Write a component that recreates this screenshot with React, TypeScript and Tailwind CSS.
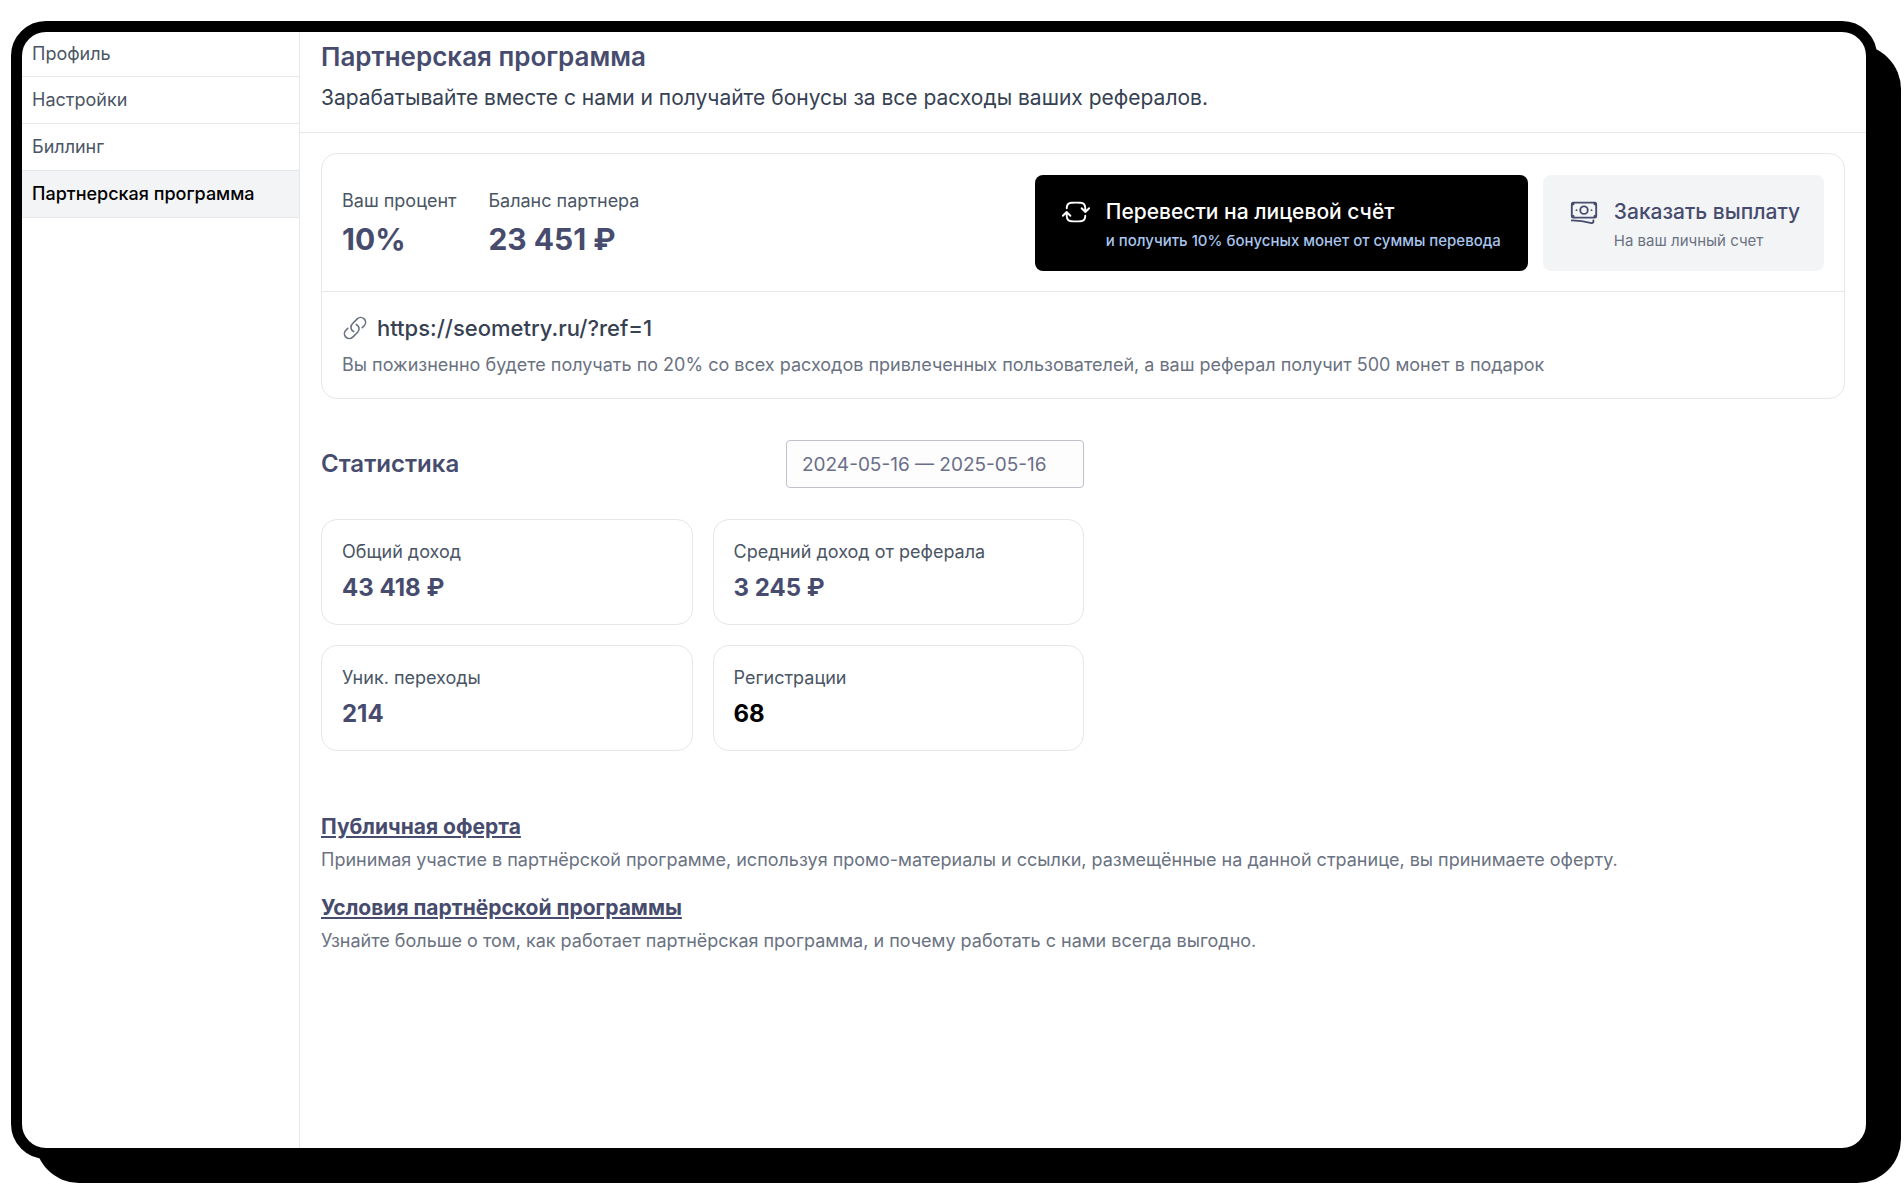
import React from 'react';
import { HiOutlineArrowPathRoundedSquare, HiOutlineBanknotes, HiOutlineLink } from 'react-icons/hi2';
import clsx from 'clsx';

const menu = [
  { title: 'Профиль', href: '#profile' },
  { title: 'Настройки', href: '#settings' },
  { title: 'Биллинг', href: '#billing' },
  { title: 'Партнерская программа', href: '#partner', active: true },
];

const stats = [
  { label: 'Общий доход', value: '43 418 ₽' },
  { label: 'Средний доход от реферала', value: '3 245 ₽' },
  { label: 'Уник. переходы', value: '214' },
  { label: 'Регистрации', value: '68', dark: true },
];

const docs = [
  {
    title: 'Публичная оферта',
    href: '#offer',
    text: 'Принимая участие в партнёрской программе, используя промо-материалы и ссылки, размещённые на данной странице, вы принимаете оферту.',
  },
  {
    title: 'Условия партнёрской программы',
    href: '#terms',
    text: 'Узнайте больше о том, как работает партнёрская программа, и почему работать с нами всегда выгодно.',
  },
];

function Sidebar() {
  return (
    <nav className="w-[278px] shrink-0 border-r border-gray-200">
      {menu.map((item) => (
        <a
          key={item.href}
          href={item.href}
          aria-current={item.active ? 'page' : undefined}
          className={clsx(
            'flex h-[47px] items-center border-b border-gray-200 px-[10px] pb-0.5 text-[18px] first:h-[45px]',
            item.active ? 'bg-gray-100 font-medium text-black' : 'text-gray-600',
          )}
        >
          {item.title}
        </a>
      ))}
    </nav>
  );
}

function Balance({ label, value }: { label: string; value: string }) {
  return (
    <div>
      <p className="text-[18px] leading-6 text-gray-600">{label}</p>
      <p className="mt-2 text-[30px] leading-9 font-bold text-[#474c6e]">{value}</p>
    </div>
  );
}

function PartnerCard() {
  return (
    <section className="rounded-2xl border border-gray-200">
      <div className="flex flex-wrap items-center justify-between gap-4 border-b border-gray-200 px-5 pt-[21px] pb-5">
        <div className="flex gap-8">
          <Balance label="Ваш процент" value="10%" />
          <Balance label="Баланс партнера" value="23 451 ₽" />
        </div>
        <div className="flex flex-wrap gap-[15px]">
          <button
            type="button"
            className="flex min-w-[493px] gap-[15px] rounded-lg bg-black pt-[22px] pr-6 pb-4 pl-[26px] text-left"
          >
            <HiOutlineArrowPathRoundedSquare className="h-[30px] w-[30px] text-white" />
            <span>
              <span className="block text-[21px] leading-[30px] font-medium text-white">Перевести на лицевой счёт</span>
              <span className="block text-[15px] leading-7 font-medium text-[#a9c5ee]">
                и получить 10% бонусных монет от суммы перевода
              </span>
            </span>
          </button>
          <button type="button" className="flex gap-[15px] rounded-lg bg-gray-100 pt-[22px] pr-6 pb-4 pl-[26px] text-left">
            <HiOutlineBanknotes className="h-[30px] w-[30px] text-[#474c6e]" />
            <span>
              <span className="block text-[21px] leading-[30px] font-medium text-[#474c6e]">Заказать выплату</span>
              <span className="block text-[15px] leading-7 text-gray-500">На ваш личный счет</span>
            </span>
          </button>
        </div>
      </div>
      <div className="p-5">
        <div className="flex h-8 items-center gap-[9px]">
          <HiOutlineLink className="h-[26px] w-[26px] text-gray-500" />
          <a href="https://seometry.ru/?ref=1" className="text-[22px] font-medium text-gray-700">
            https://seometry.ru/?ref=1
          </a>
        </div>
        <p className="mt-2 text-[18px] leading-[26px] text-gray-500">
          Вы пожизненно будете получать по 20% со всех расходов привлеченных пользователей, а ваш реферал получит 500
          монет в подарок
        </p>
      </div>
    </section>
  );
}

function Statistics() {
  return (
    <section className="mt-[41px] max-w-[763px]">
      <div className="flex items-center justify-between">
        <h2 className="text-[24px] leading-8 font-semibold text-[#474c6e]">Статистика</h2>
        <input
          type="text"
          aria-label="Период"
          defaultValue="2024-05-16 — 2025-05-16"
          className="h-12 w-[298px] rounded border border-[#bfc2cc] bg-[#fdfdfd] px-[15px] text-[19px] text-[#6b6e88]"
        />
      </div>
      <div className="mt-[31px] grid grid-cols-2 gap-5">
        {stats.map((item) => (
          <div key={item.label} className="rounded-2xl border border-gray-200 p-5">
            <p className="text-[18px] leading-6 text-gray-600">{item.label}</p>
            <p className={clsx('mt-2 text-[24px] leading-8 font-bold', item.dark ? 'text-black' : 'text-[#474c6e]')}>
              {item.value}
            </p>
          </div>
        ))}
      </div>
    </section>
  );
}

export default function App() {
  return (
    <div className="flex min-h-screen bg-white pt-[21px] pr-[27px] pb-[41px] pl-[11px] font-['Inter','Noto_Sans',sans-serif]">
      <div className="relative isolate flex grow">
        {/* Offset shadow behind the window */}
        <div className="absolute top-6 -right-6 -bottom-6 left-6 -z-10 rounded-[44px] bg-black"></div>

        <div className="flex grow overflow-hidden rounded-[35px] border-[11px] border-black bg-white">
          <Sidebar />
          <div className="min-w-0 grow">
            <header className="border-b border-gray-200 px-[21px] pt-[9px] pb-5">
              <h1 className="text-[26px] leading-8 font-semibold text-[#474c6e]">Партнерская программа</h1>
              <p className="mt-[11px] text-[21px] leading-7 text-gray-700">
                Зарабатывайте вместе с нами и получайте бонусы за все расходы ваших рефералов.
              </p>
            </header>

            <main className="px-[21px] pt-5 pb-8">
              <PartnerCard />
              <Statistics />
              <div className="mt-[62px] flex flex-col gap-[22px]">
                {docs.map((doc) => (
                  <div key={doc.href}>
                    <a href={doc.href} className="text-[21px] leading-7 font-bold text-[#474c6e] underline">
                      {doc.title}
                    </a>
                    <p className="mt-[7px] text-[18px] leading-6 text-gray-500">{doc.text}</p>
                  </div>
                ))}
              </div>
            </main>
          </div>
        </div>
      </div>
    </div>
  );
}
